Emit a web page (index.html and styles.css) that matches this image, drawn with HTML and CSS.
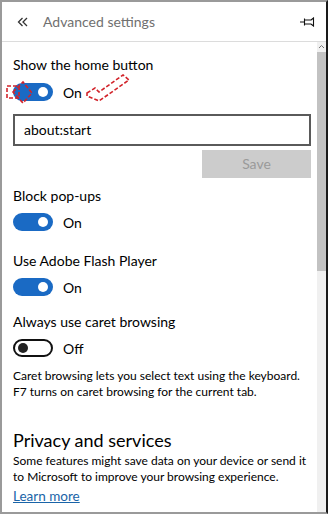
FILE: index.html
```html
<!DOCTYPE html>
<html>
<head>
<meta charset="utf-8">
<link rel="stylesheet" href="styles.css">
</head>
<body>
<div class="frame">
  <div class="header">
    <svg class="back" width="12" height="10" viewBox="0 0 12 10"><path d="M5.5 1 L1.5 5 L5.5 9 M10 1 L6 5 L10 9" fill="none" stroke="#333" stroke-width="1.3"/></svg>
    <span class="title">Advanced settings</span>
    <svg class="pin" width="15" height="10" viewBox="0 0 15 10"><path d="M0 5 H4 M4.5 1.5 V8.5 M4.5 3 H11 M4.5 7 H11 M11 3 L13.5 1 V9 L11 7" fill="none" stroke="#111" stroke-width="1.1"/></svg>
  </div>
  <div class="main">
    <div class="content">
      <div class="label first">Show the home button</div>
      <div class="toggle-row r1">
        <span class="toggle on"><span class="knob"></span></span><span class="state">On</span>
      </div>
      <div class="input">about:start</div>
      <div class="save-row"><span class="save">Save</span></div>
      <div class="label l2">Block pop-ups</div>
      <div class="toggle-row r2">
        <span class="toggle on"><span class="knob"></span></span><span class="state">On</span>
      </div>
      <div class="label l3">Use Adobe Flash Player</div>
      <div class="toggle-row r2">
        <span class="toggle on"><span class="knob"></span></span><span class="state">On</span>
      </div>
      <div class="label l4">Always use caret browsing</div>
      <div class="toggle-row r2">
        <span class="toggle off"><span class="knob"></span></span><span class="state">Off</span>
      </div>
      <p class="desc d1">Caret browsing lets you select text using the keyboard.<br>F7 turns on caret browsing for the current tab.</p>
      <h2 class="section">Privacy and services</h2>
      <p class="desc">Some features might save data on your device or send it<br>to Microsoft to improve your browsing experience.</p>
      <a class="link" href="#">Learn more</a>
    </div>
    <div class="scrollbar">
      <svg class="up" width="7" height="5" viewBox="0 0 7 5"><path d="M1 4 L3.5 1.5 L6 4" fill="none" stroke="#777" stroke-width="1"/></svg>
      <div class="thumb"></div>
    </div>
  </div>
  <svg class="annot" width="140" height="40" viewBox="0 0 140 40">
    <path d="M5 12 H17 V24 H5 Z" fill="none" stroke="#d2232a" stroke-width="1.6" stroke-dasharray="4 2"/>
    <path d="M11 18 L21 8 L30 19 L21 29 Z" fill="none" stroke="#d2232a" stroke-width="1.6" stroke-dasharray="4 2"/>
    <path d="M85 19 L93 14 L97 18 L121 1 L127 6 L97 27 L85 22 Z" fill="none" stroke="#d2232a" stroke-width="1.6" stroke-dasharray="4 2"/>
  </svg>
</div>
</body>
</html>
```

FILE: styles.css
```css
html, body {
  margin: 0;
  padding: 0;
  background: #fff;
}
.frame {
  position: relative;
  width: 328px;
  height: 514px;
  box-sizing: border-box;
  border: 2px solid #9a9a9a;
  border-right-color: #1a1a1a;
  display: flex;
  flex-direction: column;
  font-family: Lato, "Noto Sans", sans-serif;
  color: #000;
  overflow: hidden;
}
.header {
  height: 39px;
  flex: none;
  display: flex;
  align-items: center;
  border-bottom: 1px solid #dcdcdc;
}
.back {
  margin-left: 15px;
  margin-top: 1px;
}
.title {
  margin-left: 14px;
  font-size: 14px;
  color: #707070;
}
.pin {
  margin-left: auto;
  margin-right: 11px;
  margin-top: 1px;
}
.main {
  flex: 1;
  display: flex;
  min-height: 0;
}
.content {
  flex: 1;
  padding-left: 11px;
  padding-right: 6px;
  overflow: hidden;
}
.label {
  font-size: 14px;
  line-height: 20px;
}
.first { margin-top: 13px; }
.toggle-row {
  display: flex;
  align-items: center;
  height: 20px;
}
.r1 { margin-top: 7px; }
.r2 { margin-top: 6px; }
.toggle {
  width: 40px;
  height: 18px;
  box-sizing: border-box;
  border-radius: 9px;
  position: relative;
  display: inline-block;
}
.toggle.on {
  background: #1a6ac4;
}
.toggle.off {
  border: 2px solid #111;
  background: #fff;
}
.knob {
  position: absolute;
  width: 10px;
  height: 10px;
  border-radius: 50%;
  top: 4px;
}
.on .knob {
  background: #fff;
  right: 5px;
}
.off .knob {
  background: #222;
  left: 3px;
  top: 2px;
}
.state {
  margin-left: 10px;
  font-size: 14px;
}
.input {
  margin-top: 12px;
  height: 32px;
  width: 298px;
  box-sizing: border-box;
  border: 2px solid #5a5a5a;
  padding-left: 9px;
  font-size: 14px;
  line-height: 28px;
}
.save-row {
  display: flex;
  justify-content: flex-end;
  margin-top: 4px;
  width: 298px;
}
.save {
  width: 109px;
  height: 28px;
  background: #cccccc;
  color: #9a9a9a;
  font-size: 14px;
  line-height: 28px;
  text-align: center;
}
.l2 { margin-top: 8px; }
.l3 { margin-top: 19px; }
.l4 { margin-top: 15px; }
.desc {
  margin: 0;
  font-size: 12px;
  line-height: 16px;
  white-space: nowrap;
}
.d1 { margin-top: 10px; }
.section {
  margin: 27px 0 0;
  font-size: 18px;
  font-weight: normal;
  line-height: 26px;
}
.link {
  display: inline-block;
  font-size: 13.5px;
  line-height: 17px;
  color: #1a64a8;
  text-decoration: underline;
}
.scrollbar {
  width: 9px;
  flex: none;
  background: #f0f0f0;
  display: flex;
  flex-direction: column;
  align-items: center;
}
.up {
  margin-top: 2px;
  flex: none;
}
.thumb {
  margin-top: 3px;
  width: 9px;
  height: 219px;
  background: #c2c2c2;
}
.annot {
  position: absolute;
  left: 0;
  top: 72px;
}
```
